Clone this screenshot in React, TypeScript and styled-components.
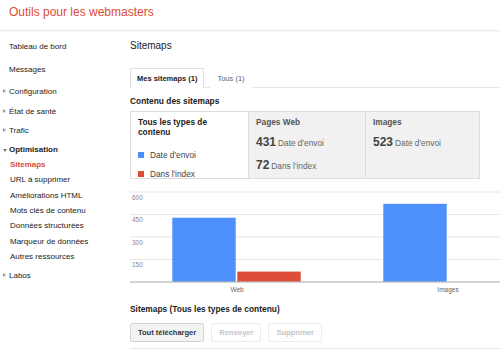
import React from 'react';
import styled, { createGlobalStyle } from 'styled-components';

const GlobalStyle = createGlobalStyle`
  html, body {
    margin: 0;
    padding: 0;
    background: #fff;
    overflow: hidden;
  }
  body {
    font-family: 'Liberation Sans', Arial, sans-serif;
    color: #222;
  }
`;

const Page = styled.div`
  width: 500px;
  height: 353px;
  overflow: hidden;
`;

const Header = styled.header`
  height: 31px;
  border-bottom: 1px solid #ebebeb;
  box-shadow: 0 1px 1px rgba(0, 0, 0, 0.03);
  padding: 5px 0 0 9px;
  box-sizing: border-box;
`;

const Title = styled.h1`
  margin: 0;
  font-size: 12px;
  line-height: 14px;
  font-weight: normal;
  color: #dd4b39;
`;

const Body = styled.div`
  display: flex;
`;

const Sidebar = styled.nav`
  width: 130px;
  flex: none;
  padding-top: 8px;
  font-size: 8px;
  color: #222;
`;

const NavItem = styled.div<{ $gap?: number; $sub?: boolean; $active?: boolean; $bold?: boolean }>`
  position: relative;
  padding-left: ${p => (p.$sub ? 10 : 9)}px;
  margin-top: ${p => p.$gap ?? 0}px;
  height: ${p => (p.$sub ? 15.33 : 15)}px;
  line-height: ${p => (p.$sub ? 15.33 : 15)}px;
  font-weight: ${p => (p.$bold || p.$active ? 'bold' : 'normal')};
  color: ${p => (p.$active ? '#dd4b39' : '#222')};
  white-space: nowrap;
`;

const Arrow = styled.span<{ $open?: boolean }>`
  position: absolute;
  left: 3px;
  top: 50%;
  width: 0;
  height: 0;
  ${p =>
    p.$open
      ? `border-left: 2.5px solid transparent;
         border-right: 2.5px solid transparent;
         border-top: 3px solid #777;
         margin-top: -1px;`
      : `border-top: 2.5px solid transparent;
         border-bottom: 2.5px solid transparent;
         border-left: 3px solid #999;
         margin-top: -2.5px;`}
`;

const Main = styled.main`
  flex: 1;
  padding-top: 8px;
  min-width: 0;
`;

const Heading = styled.h2`
  margin: 0;
  font-size: 10px;
  line-height: 14px;
  font-weight: normal;
  color: #222;
`;

const Tabs = styled.div`
  margin-top: 15px;
  width: 370px;
  display: flex;
  height: 19px;
  border-bottom: 1px solid #e6e6e6;
`;

const Tab = styled.div<{ $active?: boolean }>`
  padding: 0 6px;
  margin-right: 6px;
  font-size: 7.5px;
  line-height: 19px;
  font-weight: ${p => (p.$active ? 'bold' : 'normal')};
  color: ${p => (p.$active ? '#222' : '#666')};
  background: #fff;
  border: 1px solid ${p => (p.$active ? '#e0e0e0' : 'transparent')};
  border-bottom: none;
  box-sizing: border-box;
  height: 20px;
`;

const SectionLabel = styled.div<{ $gap: number }>`
  margin-top: ${p => p.$gap}px;
  font-size: 8.4px;
  line-height: 12px;
  font-weight: bold;
  color: #222;
`;

const SummaryBox = styled.div`
  margin-top: 4px;
  width: 350px;
  height: 68px;
  border: 1px solid #dcdcdc;
  box-sizing: border-box;
  display: grid;
  grid-template-columns: 117px 117px 1fr;
`;

const SummaryCell = styled.div<{ $shaded?: boolean }>`
  background: ${p => (p.$shaded ? '#f1f1f1' : '#fff')};
  border-left: ${p => (p.$shaded ? '1px solid #dcdcdc' : 'none')};
  padding: 5px 7px 0;
  overflow: hidden;
`;

const CellTitle = styled.div<{ $muted?: boolean }>`
  font-size: 8.3px;
  line-height: 10px;
  font-weight: bold;
  color: ${p => (p.$muted ? '#555' : '#222')};
`;

const Legend = styled.div<{ $gap: number }>`
  display: flex;
  align-items: center;
  gap: 6px;
  margin-top: ${p => p.$gap}px;
  font-size: 8.3px;
  line-height: 10px;
  color: #444;
`;

const Swatch = styled.span<{ $color: string }>`
  width: 6px;
  height: 6px;
  background: ${p => p.$color};
  flex: none;
`;

const Stat = styled.div<{ $gap: number }>`
  margin-top: ${p => p.$gap}px;
  display: flex;
  align-items: baseline;
  gap: 2px;
  line-height: 14px;
`;

const StatNumber = styled.span`
  font-size: 12px;
  font-weight: bold;
  color: #444;
`;

const StatUnit = styled.span`
  font-size: 8.3px;
  color: #666;
`;

const Chart = styled.svg`
  display: block;
  margin-top: 5px;
  overflow: visible;
`;

const Buttons = styled.div`
  margin-top: 8px;
  display: flex;
  gap: 7px;
`;

const Button = styled.div<{ $primary?: boolean }>`
  height: 19px;
  box-sizing: border-box;
  padding: 0 7px;
  font-size: 7.5px;
  line-height: 17px;
  font-weight: bold;
  border-radius: 2px;
  border: 1px solid ${p => (p.$primary ? '#d4d4d4' : '#ececec')};
  background: ${p => (p.$primary ? '#f3f3f3' : '#fff')};
  color: ${p => (p.$primary ? '#333' : '#c4c4c4')};
`;

const BottomRule = styled.div`
  margin-top: 6px;
  width: 370px;
  border-top: 1px solid #e8e8e8;
`;

const BLUE = '#4d8ffd';
const RED = '#dd4b39';

const gridRows = [
  { y: 8, label: '600' },
  { y: 30.5, label: '450' },
  { y: 53, label: '300' },
  { y: 75.5, label: '150' },
];

const BASE = 98;
const scale = 22.5 / 150;

const bars = [
  { x: 42, value: 431, color: BLUE },
  { x: 107, value: 72, color: RED },
  { x: 253, value: 523, color: BLUE },
];

const SitemapChart = () => (
  <Chart width={370} height={110}>
    {gridRows.map(r => (
      <g key={r.label}>
        <line x1={0} x2={370} y1={r.y} y2={r.y} stroke="#e6e6e6" strokeWidth={1} />
        <text x={2} y={r.y + 7.5} fontSize={6.5} fill="#888" fontFamily="Liberation Sans, Arial, sans-serif">
          {r.label}
        </text>
      </g>
    ))}
    {bars.map(b => {
      const h = b.value * scale;
      return (
        <rect key={b.x} x={b.x} y={BASE - h} width={64} height={h} fill={b.color} stroke="#fff" strokeWidth={0.6} />
      );
    })}
    <line x1={0} x2={370} y1={BASE} y2={BASE} stroke="#a8a8a8" strokeWidth={1.2} />
    <g fontSize={6.5} fill="#666" fontFamily="Liberation Sans, Arial, sans-serif" textAnchor="middle">
      <text x={107} y={108}>Web</text>
      <text x={318} y={108}>Images</text>
    </g>
  </Chart>
);

const App: React.FC = () => {
  return (
    <Page>
      <GlobalStyle />
      <Header>
        <Title>Outils pour les webmasters</Title>
      </Header>
      <Body>
        <Sidebar>
          <NavItem>Tableau de bord</NavItem>
          <NavItem $gap={8}>Messages</NavItem>
          <NavItem $gap={7}><Arrow />Configuration</NavItem>
          <NavItem $gap={5}><Arrow />État de santé</NavItem>
          <NavItem $gap={4}><Arrow />Trafic</NavItem>
          <NavItem $gap={4} $bold><Arrow $open />Optimisation</NavItem>
          <NavItem $sub $active>Sitemaps</NavItem>
          <NavItem $sub>URL à supprimer</NavItem>
          <NavItem $sub>Améliorations HTML</NavItem>
          <NavItem $sub>Mots clés de contenu</NavItem>
          <NavItem $sub>Données structurées</NavItem>
          <NavItem $sub>Marqueur de données</NavItem>
          <NavItem $sub>Autres ressources</NavItem>
          <NavItem $gap={4}><Arrow />Labos</NavItem>
        </Sidebar>

        <Main>
          <Heading>Sitemaps</Heading>
          <Tabs>
            <Tab $active>Mes sitemaps (1)</Tab>
            <Tab>Tous (1)</Tab>
          </Tabs>

          <SectionLabel $gap={7}>Contenu des sitemaps</SectionLabel>
          <SummaryBox>
            <SummaryCell>
              <CellTitle>Tous les types de<br />contenu</CellTitle>
              <Legend $gap={13}><Swatch $color={BLUE} />Date d'envoi</Legend>
              <Legend $gap={9}><Swatch $color={RED} />Dans l'index</Legend>
            </SummaryCell>
            <SummaryCell $shaded>
              <CellTitle $muted>Pages Web</CellTitle>
              <Stat $gap={8}><StatNumber>431</StatNumber><StatUnit>Date d'envoi</StatUnit></Stat>
              <Stat $gap={8}><StatNumber>72</StatNumber><StatUnit>Dans l'index</StatUnit></Stat>
            </SummaryCell>
            <SummaryCell $shaded>
              <CellTitle $muted>Images</CellTitle>
              <Stat $gap={8}><StatNumber>523</StatNumber><StatUnit>Date d'envoi</StatUnit></Stat>
            </SummaryCell>
          </SummaryBox>

          <SitemapChart />

          <SectionLabel $gap={9}>Sitemaps (Tous les types de contenu)</SectionLabel>
          <Buttons>
            <Button $primary>Tout télécharger</Button>
            <Button>Renvoyer</Button>
            <Button>Supprimer</Button>
          </Buttons>
          <BottomRule />
        </Main>
      </Body>
    </Page>
  );
};

export default App;
